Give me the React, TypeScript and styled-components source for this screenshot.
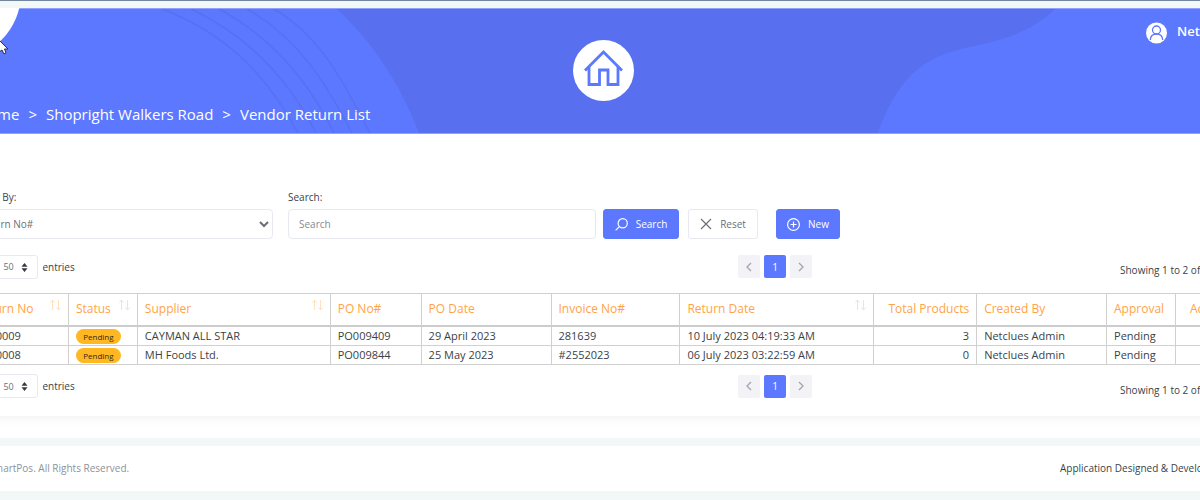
import React from "react";
import styled, { createGlobalStyle, css } from "styled-components";

const blue = "#5c78ff";
const sans = `"Open Sans", "Noto Sans", sans-serif`;

const GlobalStyle = createGlobalStyle`
  *, *::before, *::after { box-sizing: border-box; }
  body {
    margin: 0;
    background: #f2f7f8;
    color: #3b3f47;
    font-family: ${sans};
    font-size: 10px;
    line-height: 16px;
  }
  button, input, select { font-family: inherit; }
`;

const Viewport = styled.div`
  overflow: hidden;
  min-height: 100vh;
  border-top: 1px solid #74859f;
`;

const Page = styled.div`
  margin: 0 -86px 0 -80px;
  padding-top: 7px;
`;

const Header = styled.header`
  position: relative;
  display: grid;
  grid-template-columns: 1fr auto 1fr;
  grid-template-rows: 92px 32px;
  height: 126px;
  padding-top: 1px;
  border-bottom: 1px solid #8fa2fb;
  background: ${blue};
  color: #fff;
  overflow: hidden;
`;

const Backdrop = styled.svg`
  position: absolute;
  inset: 0;
  width: 100%;
  height: 100%;
`;

const HomeLink = styled.a`
  position: relative;
  grid-column: 2;
  align-self: end;
  display: grid;
  place-items: center;
  width: 61px;
  height: 61px;
  border-radius: 50%;
  background: #fff;
`;

const User = styled.a`
  position: relative;
  grid-column: 3;
  justify-self: end;
  align-self: start;
  display: flex;
  gap: 10px;
  width: 140px;
  padding-top: 13px;
  color: #fff;
  font-size: 13px;
  font-weight: 600;
  line-height: 18px;
  text-decoration: none;
  white-space: nowrap;
`;

const Breadcrumb = styled.nav`
  position: relative;
  grid-row: 2;
  grid-column: 1 / -1;
  display: flex;
  gap: 9px;
  padding-left: 57px;
  font-size: 15px;
  line-height: 26px;
`;

const Crumb = styled.a`
  color: #fff;
  text-decoration: none;
`;

const Card = styled.main`
  padding: 55px 40px 18px 48px;
  background: #fff;
  box-shadow: 0 2px 10px rgba(0, 0, 0, 0.06);
`;

const Gutter = styled.div`
  height: 22px;
`;

const Body = styled.div`
  background: #fff;
`;

const Filters = styled.form`
  display: grid;
  grid-template-columns: 305fr 15fr 308fr 7fr 643fr;
  align-items: end;
`;

const Field = styled.div<{ $column: number }>`
  grid-column: ${(p) => p.$column};
  display: flex;
  flex-direction: column;
  gap: 4px;
`;

const control = css`
  width: 100%;
  height: 30px;
  border: 1px solid #e8e8f1;
  border-radius: 4px;
  background: #fff;
  color: #6b7078;
  font-size: 10px;
  outline: none;
`;

const SelectBox = styled.select`
  ${control}
  padding: 0 0 0 6px;
`;

const TextInput = styled.input`
  ${control}
  padding: 0 10px;
  &::placeholder { color: #858a93; }
`;

const Actions = styled.div`
  grid-column: 5;
  display: flex;
  align-items: flex-start;
  height: 30px;
`;

const Button = styled.button<{ $outline?: boolean; $width: number }>`
  display: flex;
  align-items: center;
  justify-content: center;
  gap: 8px;
  width: ${(p) => p.$width}px;
  height: 30px;
  padding: 0;
  border: 1px solid ${(p) => (p.$outline ? "#e8e8f1" : blue)};
  border-radius: 3px;
  background: ${(p) => (p.$outline ? "#fff" : blue)};
  color: ${(p) => (p.$outline ? "#6b7078" : "#fff")};
  font-size: 10px;
  & + & { margin-left: 9px; }
  &:last-child { margin-left: 18px; }
`;

const Controls = styled.div<{ $top: number }>`
  display: grid;
  grid-template-columns: 770fr 508fr;
  margin-top: ${(p) => p.$top}px;
  height: 24px;
`;

const Length = styled.label`
  display: flex;
  align-items: center;
  gap: 4px;
`;

const LengthSelect = styled.span`
  position: relative;
  display: flex;
  select {
    appearance: none;
    width: 41px;
    height: 24px;
    padding: 0 5px;
    border: 1px solid #e8e8f1;
    border-radius: 3px;
    background: #fff;
    color: #6b7078;
    font-size: 9px;
  }
  svg {
    position: absolute;
    right: 10px;
    top: 8px;
    pointer-events: none;
  }
`;

const PagerArea = styled.div`
  display: flex;
  justify-content: space-between;
  padding-top: 1px;
`;

const Pager = styled.div`
  display: flex;
  gap: 4px;
`;

const PageButton = styled.button<{ $current?: boolean }>`
  display: grid;
  place-items: center;
  width: 22px;
  height: 23px;
  padding: 0;
  border: 0;
  border-radius: 2px;
  background: ${(p) => (p.$current ? blue : "#f2f2f7")};
  color: ${(p) => (p.$current ? "#fff" : "#a3a5ad")};
  font-size: 10px;
`;

const Info = styled.span`
  width: 126px;
  padding-top: 6px;
  line-height: 18px;
  white-space: nowrap;
`;

const Table = styled.table`
  width: 100%;
  margin-top: 15px;
  border-collapse: collapse;
  table-layout: fixed;
`;

type Align = "left" | "right" | "center";

const HeadCell = styled.th<{ $align?: Align }>`
  height: 32px;
  padding: 0 7px;
  border: 1px solid #d0d0d0;
  border-bottom: 2px solid #cccccc;
  color: #ffa348;
  font-size: 12px;
  font-weight: 400;
  text-align: ${(p) => p.$align ?? "left"};
  white-space: nowrap;
`;

const HeadInner = styled.div`
  display: flex;
  justify-content: space-between;
  svg { margin-top: -2px; flex: none; }
`;

const Cell = styled.td<{ $align?: Align }>`
  height: 19px;
  padding: 0 7px;
  border: 1px solid #d0d0d0;
  font-size: 11px;
  line-height: 18px;
  text-align: ${(p) => p.$align ?? "left"};
  white-space: nowrap;
`;

const Badge = styled.span`
  display: block;
  width: 45px;
  height: 15px;
  margin-top: 2px;
  border-radius: 8px;
  background: #ffb822;
  color: #33291a;
  font-size: 8px;
  line-height: 15px;
  text-align: center;
`;

const Footer = styled.footer`
  display: flex;
  justify-content: space-between;
  margin-top: 8px;
  padding: 14px 40px 15px 32px;
  background: #fff;
  white-space: nowrap;
`;

const Copyright = styled.span`
  color: #8d929c;
`;

const Credit = styled.span`
  width: 186px;
`;

const Pointer = styled.svg`
  position: absolute;
  left: 0;
  top: 39px;
`;

const SortIcon = () => (
  <svg width="11" height="12" viewBox="0 0 11 12" fill="none" stroke="#ffe0c2" aria-hidden="true">
    <path d="M2.500 11V1M0.500 3.500L2.500 1L4.500 3.500" />
    <path d="M8.500 1V11M6.500 8.500L8.500 11L10.500 8.500" />
  </svg>
);

const Chevron = ({ d }: { d: string }) => (
  <svg width="8" height="10" viewBox="0 0 8 10" fill="none" stroke="currentColor" strokeWidth="1.300" aria-hidden="true">
    <path d={d} />
  </svg>
);

const columns: { label: string; width: number; sort?: boolean; align?: Align }[] = [
  { label: "Return No", width: 100, sort: true },
  { label: "Status", width: 69, sort: true },
  { label: "Supplier", width: 193, sort: true },
  { label: "PO No#", width: 91 },
  { label: "PO Date", width: 130 },
  { label: "Invoice No#", width: 129 },
  { label: "Return Date", width: 194, sort: true },
  { label: "Total Products", width: 103, align: "right" },
  { label: "Created By", width: 130 },
  { label: "Approval", width: 69 },
  { label: "Actions", width: 70, align: "center" },
];

const tableWidth = columns.reduce((sum, c) => sum + c.width, 0);

const rows = [
  ["VR00009", "Pending", "CAYMAN ALL STAR", "PO009409", "29 April 2023", "281639", "10 July 2023 04:19:33 AM", "3", "Netclues Admin", "Pending", ""],
  ["VR00008", "Pending", "MH Foods Ltd.", "PO009844", "25 May 2023", "#2552023", "06 July 2023 03:22:59 AM", "0", "Netclues Admin", "Pending", ""],
];

const TableControls = ({ top }: { top: number }) => (
  <Controls $top={top}>
    <Length>
      Show
      <LengthSelect>
        <select defaultValue="50">
          <option>50</option>
        </select>
        <svg width="7" height="9" viewBox="0 0 7 9" fill="#343a40" aria-hidden="true">
          <path d="M3.500 0L6.500 3.800H.5ZM3.500 9L6.500 5.200H.5Z" />
        </svg>
      </LengthSelect>
      entries
    </Length>
    <PagerArea>
      <Pager>
        <PageButton type="button" aria-label="Previous page">
          <Chevron d="M6 1L2 5L6 9" />
        </PageButton>
        <PageButton type="button" $current>1</PageButton>
        <PageButton type="button" aria-label="Next page">
          <Chevron d="M2 1L6 5L2 9" />
        </PageButton>
      </Pager>
      <Info>Showing 1 to 2 of 2 entries</Info>
    </PagerArea>
  </Controls>
);

export default function App() {
  return (
    <Viewport>
      <GlobalStyle />
      <Page>
        <Header>
          <Backdrop viewBox="-80 8 1366 125" preserveAspectRatio="xMidYMid slice" aria-hidden="true">
            <path d="M337 9C373 42 401 86 419 133H878C890 99 909 63 954 51C980 43 1020 42 1055 9Z" fill="#5870f0" />
            <g fill="none" stroke="#5671f2" strokeWidth="1.500">
              <path d="M162 9C222 32 264 70 298 133" />
              <path d="M191 9C244 34 287 76 316 133" />
              <path d="M219 9C271 37 308 80 334 133" />
              <path d="M247 9C298 38 326 83 352 133" />
              <path d="M274 9C322 37 345 85 370 133" />
            </g>
            <path d="M-80 8.500H1286" stroke="#8fa2fb" />
            <circle cx="-45" cy="-7" r="66" fill="#fff" />
          </Backdrop>
          <HomeLink href="#" aria-label="Home">
            <svg width="39" height="41" viewBox="0 0 39 41" fill="none" stroke={blue} strokeWidth="2.800" aria-hidden="true">
              <path d="M1 20.500L19.500 2L38 20.500" />
              <path d="M5 17V34.500H15.500V20H24V34.500H34V17" />
            </svg>
          </HomeLink>
          <User href="#">
            <svg width="21" height="22" viewBox="0 0 21 22" fill="none" aria-hidden="true">
              <circle cx="10.500" cy="11" r="10.500" fill="#fff" />
              <g stroke={blue} strokeWidth="1.300">
                <circle cx="10.500" cy="8" r="4" />
                <path d="M4.300 18C4.500 14 7 12 10.500 12S16.500 14 16.700 18" />
              </g>
            </svg>
            Netclues
          </User>
          <Breadcrumb aria-label="Breadcrumb">
            <Crumb href="#">Home</Crumb>
            <span>&gt;</span>
            <Crumb href="#">Shopright Walkers Road</Crumb>
            <span>&gt;</span>
            <Crumb href="#">Vendor Return List</Crumb>
          </Breadcrumb>
        </Header>
        <Body>
          <Card>
            <Filters onSubmit={(e) => e.preventDefault()}>
              <Field $column={1}>
                <label htmlFor="by">Search By:</label>
                <SelectBox id="by">
                  <option>Return No#</option>
                </SelectBox>
              </Field>
              <Field $column={3}>
                <label htmlFor="term">Search:</label>
                <TextInput id="term" placeholder="Search" />
              </Field>
              <Actions>
                <Button $width={76}>
                  <svg width="13" height="13" viewBox="0 0 13 13" fill="none" stroke="currentColor" strokeWidth="1.200" aria-hidden="true">
                    <circle cx="7.700" cy="5.300" r="4.600" />
                    <path d="M4.400 8.600L.6 12.400" />
                  </svg>
                  Search
                </Button>
                <Button $width={70} $outline type="reset">
                  <svg width="12" height="12" viewBox="0 0 12 12" fill="none" stroke="currentColor" strokeWidth="1.200" aria-hidden="true">
                    <path d="M1 1L11 11M11 1L1 11" />
                  </svg>
                  Reset
                </Button>
                <Button $width={64} type="button">
                  <svg width="13" height="13" viewBox="0 0 13 13" fill="none" stroke="currentColor" strokeWidth="1.200" aria-hidden="true">
                    <circle cx="6.500" cy="6.500" r="5.900" />
                    <path d="M6.500 3.500V9.500M3.500 6.500H9.500" />
                  </svg>
                  New
                </Button>
              </Actions>
            </Filters>
            <TableControls top={15} />
            <Table>
              <colgroup>
                {columns.map((c) => (
                  <col key={c.label} style={{ width: `${(c.width / tableWidth) * 100}%` }} />
                ))}
              </colgroup>
              <thead>
                <tr>
                  {columns.map((c) => (
                    <HeadCell key={c.label} $align={c.align} scope="col">
                      {c.sort ? (
                        <HeadInner>
                          {c.label}
                          <SortIcon />
                        </HeadInner>
                      ) : (
                        c.label
                      )}
                    </HeadCell>
                  ))}
                </tr>
              </thead>
              <tbody>
                {rows.map((row) => (
                  <tr key={row[0]}>
                    {row.map((value, i) => (
                      <Cell key={columns[i].label} $align={columns[i].align}>
                        {i === 1 ? <Badge>{value}</Badge> : value}
                      </Cell>
                    ))}
                  </tr>
                ))}
              </tbody>
            </Table>
            <TableControls top={9} />
          </Card>
          <Gutter />
        </Body>
        <Footer>
          <Copyright>© 2023 SmartPos. All Rights Reserved.</Copyright>
          <Credit>Application Designed &amp; Developed by Netclues</Credit>
        </Footer>
      </Page>
      <Pointer width="9" height="16" viewBox="0 0 9 16" aria-hidden="true">
        <path d="M-1 1L8 10H4.500L6 14L4 15L2 11L-1 13Z" fill="#fff" stroke="#26304f" />
      </Pointer>
    </Viewport>
  );
}
